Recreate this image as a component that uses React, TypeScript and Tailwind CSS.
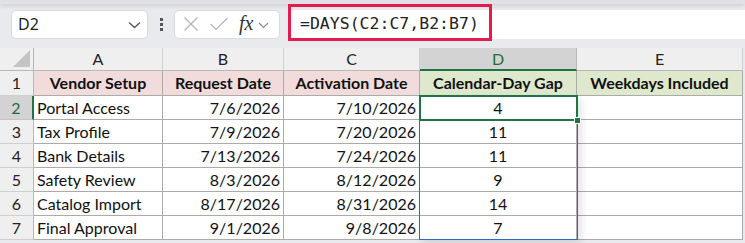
import React from "react";

const cols = [
  { key: "A", w: 129 },
  { key: "B", w: 121 },
  { key: "C", w: 136 },
  { key: "D", w: 157 },
  { key: "E", w: 166 },
];

const rows: [string, string, string, string][] = [
  ["Portal Access", "7/6/2026", "7/10/2026", "4"],
  ["Tax Profile", "7/9/2026", "7/20/2026", "11"],
  ["Bank Details", "7/13/2026", "7/24/2026", "11"],
  ["Safety Review", "8/3/2026", "8/12/2026", "9"],
  ["Catalog Import", "8/17/2026", "8/31/2026", "14"],
  ["Final Approval", "9/1/2026", "9/8/2026", "7"],
];

const headers = ["Vendor Setup", "Request Date", "Activation Date", "Calendar-Day Gap", "Weekdays Included"];

const cellFont = { fontFamily: "Lato, 'Open Sans', sans-serif" };

export default function App() {
  return (
    <div
      className="w-[745px] h-[243px] bg-[#e8eaed] overflow-hidden relative"
      style={cellFont}
    >
      {/* top shadow band */}
      <div className="h-[4px] bg-[#dfe1e4] shadow-[0_2px_4px_rgba(0,0,0,0.12)]" />
      {/* toolbar */}
      <div className="flex items-center h-[41px] pl-[11px] relative">
        <div className="w-[137px] h-[29px] mt-[-1px] bg-white rounded-[5px] border border-[#d8dadd] flex items-center justify-between pl-[6px] pr-[6px]">
          <span className="text-[16px] text-[#222]" style={{ fontFamily: "'Noto Sans', sans-serif" }}>D2</span>
          <svg width="13" height="8" viewBox="0 0 13 8" className="mt-[1px]">
            <path d="M1 1.5 L6.5 6.5 L12 1.5" fill="none" stroke="#555" strokeWidth="1.3" />
          </svg>
        </div>
        <div className="w-[26px] flex flex-col items-center gap-[2px] mt-[-1px]">
          <div className="w-[3px] h-[3px] bg-[#555]" />
          <div className="w-[3px] h-[3px] bg-[#555]" />
          <div className="w-[3px] h-[3px] bg-[#555]" />
        </div>
        <div className="w-[106px] h-[29px] mt-[-1px] bg-white rounded-[5px] border border-[#d8dadd] flex items-center pl-[8px]">
          <svg width="16" height="16" viewBox="0 0 16 16">
            <path d="M1.5 1.5 L14.5 14.5 M14.5 1.5 L1.5 14.5" stroke="#b4b4b4" strokeWidth="1.2" fill="none" />
          </svg>
          <svg width="20" height="16" viewBox="0 0 20 16" className="ml-[10px]">
            <path d="M1.5 8 L7 13.5 L18.5 2" stroke="#b4b4b4" strokeWidth="1.2" fill="none" />
          </svg>
          <span
            className="ml-[10px] text-[20px] italic text-[#333] leading-none mt-[-2px]"
            style={{ fontFamily: "'Liberation Serif', serif" }}
          >
            fx
          </span>
          <svg width="11" height="7" viewBox="0 0 11 7" className="ml-[5px] mt-[2px]">
            <path d="M1 1 L5.5 5.5 L10 1" fill="none" stroke="#888" strokeWidth="1.1" />
          </svg>
        </div>
        <div className="ml-[8px] flex-1 h-[29px] mt-[-1px] bg-white flex items-center relative">
          <div className="absolute left-0 top-[-6px] w-[204px] h-[37px] border-[3px] border-[#e21d4e]" />
          <span
            className="pl-[12px] text-[16.5px] text-[#222] whitespace-pre"
            style={{ fontFamily: "'DejaVu Sans Mono', monospace" }}
          >
            =DAYS(C2:C7,B2:B7)
          </span>
        </div>
      </div>
      <div className="h-[3px]" />
      {/* grid */}
      <div className="relative w-[743px]">
        {/* column header row */}
        <div className="flex h-[23px] bg-[#efefef] border-b border-[#b8b8b8]">
          <div className="w-[34px] border-r border-[#b8b8b8] relative">
            <svg width="20" height="20" viewBox="0 0 20 20" className="absolute right-[2px] bottom-[2px]">
              <path d="M19 2 L19 19 L2 19 Z" fill="#c4c4c4" />
            </svg>
          </div>
          {cols.map((c) => (
            <div
              key={c.key}
              style={{ width: c.w }}
              className={
                c.key === "D"
                  ? "flex items-center justify-center text-[16px] text-[#1e6b41] bg-[#d3d3d3] border-r border-[#b8b8b8] border-b-2 border-b-[#217346] mb-[-1px]"
                  : "flex items-center justify-center text-[16px] text-[#222] border-r border-[#d0d0d0]"
              }
            >
              {c.key}
            </div>
          ))}
        </div>
        {/* row 1 */}
        <div className="flex h-[25px] bg-white">
          <div className="w-[34px] bg-[#efefef] border-r border-[#b8b8b8] border-b border-b-[#d0d0d0] flex items-center justify-center text-[16px] text-[#222]">
            1
          </div>
          {headers.map((h, i) => (
            <div
              key={h}
              style={{ width: cols[i].w }}
              className={
                (i < 3 ? "bg-[#f2dcdb] " : "bg-[#dde8cc] ") +
                "flex items-center justify-center font-bold text-[16px] text-[#111] border-r border-b border-[#ababab] whitespace-nowrap"
              }
            >
              {h}
            </div>
          ))}
        </div>
        {rows.map((r, ri) => (
          <div key={ri} className="flex h-[24px] bg-white">
            <div
              className={
                ri === 0
                  ? "w-[34px] bg-[#d3d3d3] border-r-2 border-[#217346] border-b border-b-[#c4c4c4] flex items-center justify-center text-[16px] text-[#1e6b41]"
                  : "w-[34px] bg-[#efefef] border-r border-[#b8b8b8] border-b border-b-[#d0d0d0] flex items-center justify-center text-[16px] text-[#222]"
              }
            >
              {ri + 2}
            </div>
            <div style={{ width: cols[0].w }} className="flex items-center pl-[3px] text-[16px] text-[#111] border-r border-b border-[#ababab] whitespace-nowrap">
              {r[0]}
            </div>
            <div style={{ width: cols[1].w }} className="flex items-center justify-end pr-[3px] text-[16px] text-[#111] border-r border-b border-[#ababab]">
              {r[1]}
            </div>
            <div style={{ width: cols[2].w }} className="flex items-center justify-end pr-[3px] text-[16px] text-[#111] border-r border-b border-[#ababab]">
              {r[2]}
            </div>
            <div style={{ width: cols[3].w }} className="flex items-center justify-center text-[16px] text-[#111] border-r border-b border-[#ababab]">
              {r[3]}
            </div>
            <div style={{ width: cols[4].w }} className="border-r border-b border-[#ababab]" />
          </div>
        ))}
        {/* selection range D2:D7 */}
        <div className="absolute left-[419px] top-[48px] w-[159px] h-[144px] border-[1.5px] border-[#2f66cc] shadow-[3px_3px_8px_rgba(0,0,0,0.12)] pointer-events-none" />
        {/* active cell */}
        <div className="absolute left-[419px] top-[47px] w-[159px] h-[26px] border-2 border-[#217346] pointer-events-none" />
        <div className="absolute left-[574px] top-[69px] w-[7px] h-[7px] bg-[#217346] border border-white pointer-events-none" />
      </div>
    </div>
  );
}
